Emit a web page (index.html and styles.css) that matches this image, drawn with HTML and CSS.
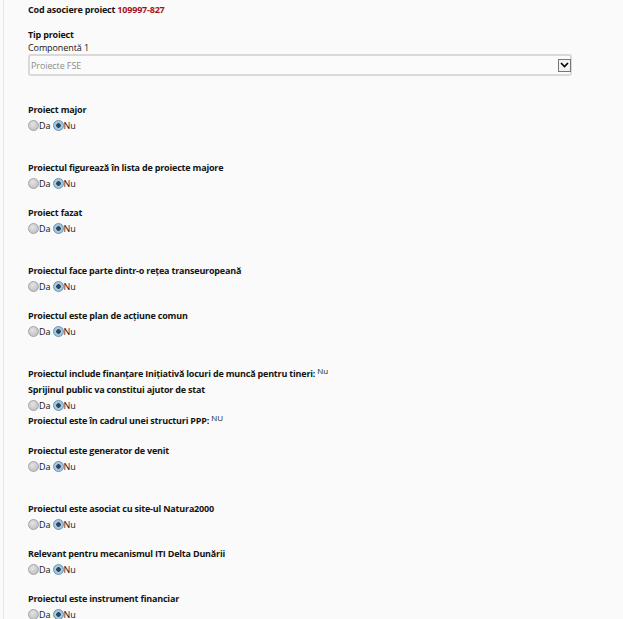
FILE: index.html
```html
<!DOCTYPE html>
<html lang="ro">
<head>
    <meta charset="UTF-8">
    <title>Proiect</title>
    <link rel="stylesheet" href="styles.css">
</head>
<body>
    <div class="page">
        <div class="label code">Cod asociere proiect <span class="code-nr">109997-827</span></div>

        <div class="label tip">Tip proiect</div>
        <div class="sub">Componentă 1</div>
        <div class="select">
            <span>Proiecte FSE</span>
            <span class="arrow">
                <svg width="9" height="6" viewBox="0 0 9 6"><path d="M1 1 L4.5 4.5 L8 1" fill="none" stroke="#000" stroke-width="1.6"/></svg>
            </span>
        </div>

        <div class="spacer"></div>
        <div class="field">
            <div class="label">Proiect major</div>
            <div class="radios"><span class="radio"></span>Da <span class="radio on"></span>Nu</div>
        </div>
        <div class="spacer"></div>
        <div class="field">
            <div class="label">Proiectul figurează în lista de proiecte majore</div>
            <div class="radios"><span class="radio"></span>Da <span class="radio on"></span>Nu</div>
        </div>
        <div class="field">
            <div class="label">Proiect fazat</div>
            <div class="radios"><span class="radio"></span>Da <span class="radio on"></span>Nu</div>
        </div>
        <div class="spacer"></div>
        <div class="field">
            <div class="label">Proiectul face parte dintr-o rețea transeuropeană</div>
            <div class="radios"><span class="radio"></span>Da <span class="radio on"></span>Nu</div>
        </div>
        <div class="field">
            <div class="label">Proiectul este plan de acțiune comun</div>
            <div class="radios"><span class="radio"></span>Da <span class="radio on"></span>Nu</div>
        </div>
        <div class="spacer"></div>
        <div class="label tall">Proiectul include finanțare Inițiativă locuri de muncă pentru tineri: <span class="val">Nu</span></div>
        <div class="field flush">
            <div class="label">Sprijinul public va constitui ajutor de stat</div>
            <div class="radios"><span class="radio"></span>Da <span class="radio on"></span>Nu</div>
        </div>
        <div class="field wide">
            <div class="label">Proiectul este în cadrul unei structuri PPP: <span class="val">NU</span></div>
        </div>
        <div class="field">
            <div class="label">Proiectul este generator de venit</div>
            <div class="radios"><span class="radio"></span>Da <span class="radio on"></span>Nu</div>
        </div>
        <div class="spacer"></div>
        <div class="field">
            <div class="label">Proiectul este asociat cu site-ul Natura2000</div>
            <div class="radios"><span class="radio"></span>Da <span class="radio on"></span>Nu</div>
        </div>
        <div class="field">
            <div class="label">Relevant pentru mecanismul ITI Delta Dunării</div>
            <div class="radios"><span class="radio"></span>Da <span class="radio on"></span>Nu</div>
        </div>
        <div class="field">
            <div class="label">Proiectul este instrument financiar</div>
            <div class="radios"><span class="radio"></span>Da <span class="radio on"></span>Nu</div>
        </div>
    </div>
</body>
</html>
```

FILE: styles.css
```css
body {
    margin: 0;
    padding: 0;
    background: #fafafa;
    font-family: 'Open Sans', 'Liberation Sans', sans-serif;
    font-size: 9px;
    color: #141414;
}
.page {
    margin-left: 3px;
    border-left: 1px solid #e8e8e8;
    padding: 2px 0 0 24px;
    min-height: 700px;
}
.label {
    font-weight: bold;
    line-height: 15px;
    letter-spacing: -0.2px;
}
.code-nr {
    color: #a8121c;
}
.tip {
    margin-top: 11px;
    line-height: 14px;
}
.sub {
    line-height: 12px;
    letter-spacing: -0.1px;
}
.select {
    box-sizing: border-box;
    width: 544px;
    height: 22px;
    margin-bottom: 13px;
    border: 2px solid #d9d9d9;
    border-radius: 3px;
    background: #fbfbfb;
    display: flex;
    align-items: center;
    justify-content: space-between;
    padding-left: 1px;
    color: #8c8c8c;
    letter-spacing: -0.1px;
}
.arrow {
    width: 11px;
    height: 11px;
    border: 1px solid #777;
    background: #f2f2f2;
    display: flex;
    align-items: center;
    justify-content: center;
    margin-right: -1px;
}
.spacer {
    height: 13px;
}
.field {
    margin-bottom: 14px;
}
.field.flush {
    margin-bottom: 0;
}
.field.wide {
    margin-bottom: 15px;
}
.tall {
    line-height: 16px;
}
.radios {
    display: flex;
    align-items: center;
    height: 16px;
    white-space: pre;
    letter-spacing: -0.1px;
}
.radio {
    width: 9px;
    height: 9px;
    border-radius: 50%;
    border: 1px solid #a4a4a4;
    background: radial-gradient(circle at 40% 35%, #e4e4e4, #b8b8b8);
    display: inline-block;
}
.radio.on {
    border-color: #6a94b4;
    background: radial-gradient(circle, #2c475b 0, #2c475b 2px, #aecbe2 2.6px, #90b5d3 100%);
}
.val {
    font-weight: normal;
    font-size: 8px;
    vertical-align: top;
    line-height: 10px;
    letter-spacing: 0;
    color: #222;
}
```
